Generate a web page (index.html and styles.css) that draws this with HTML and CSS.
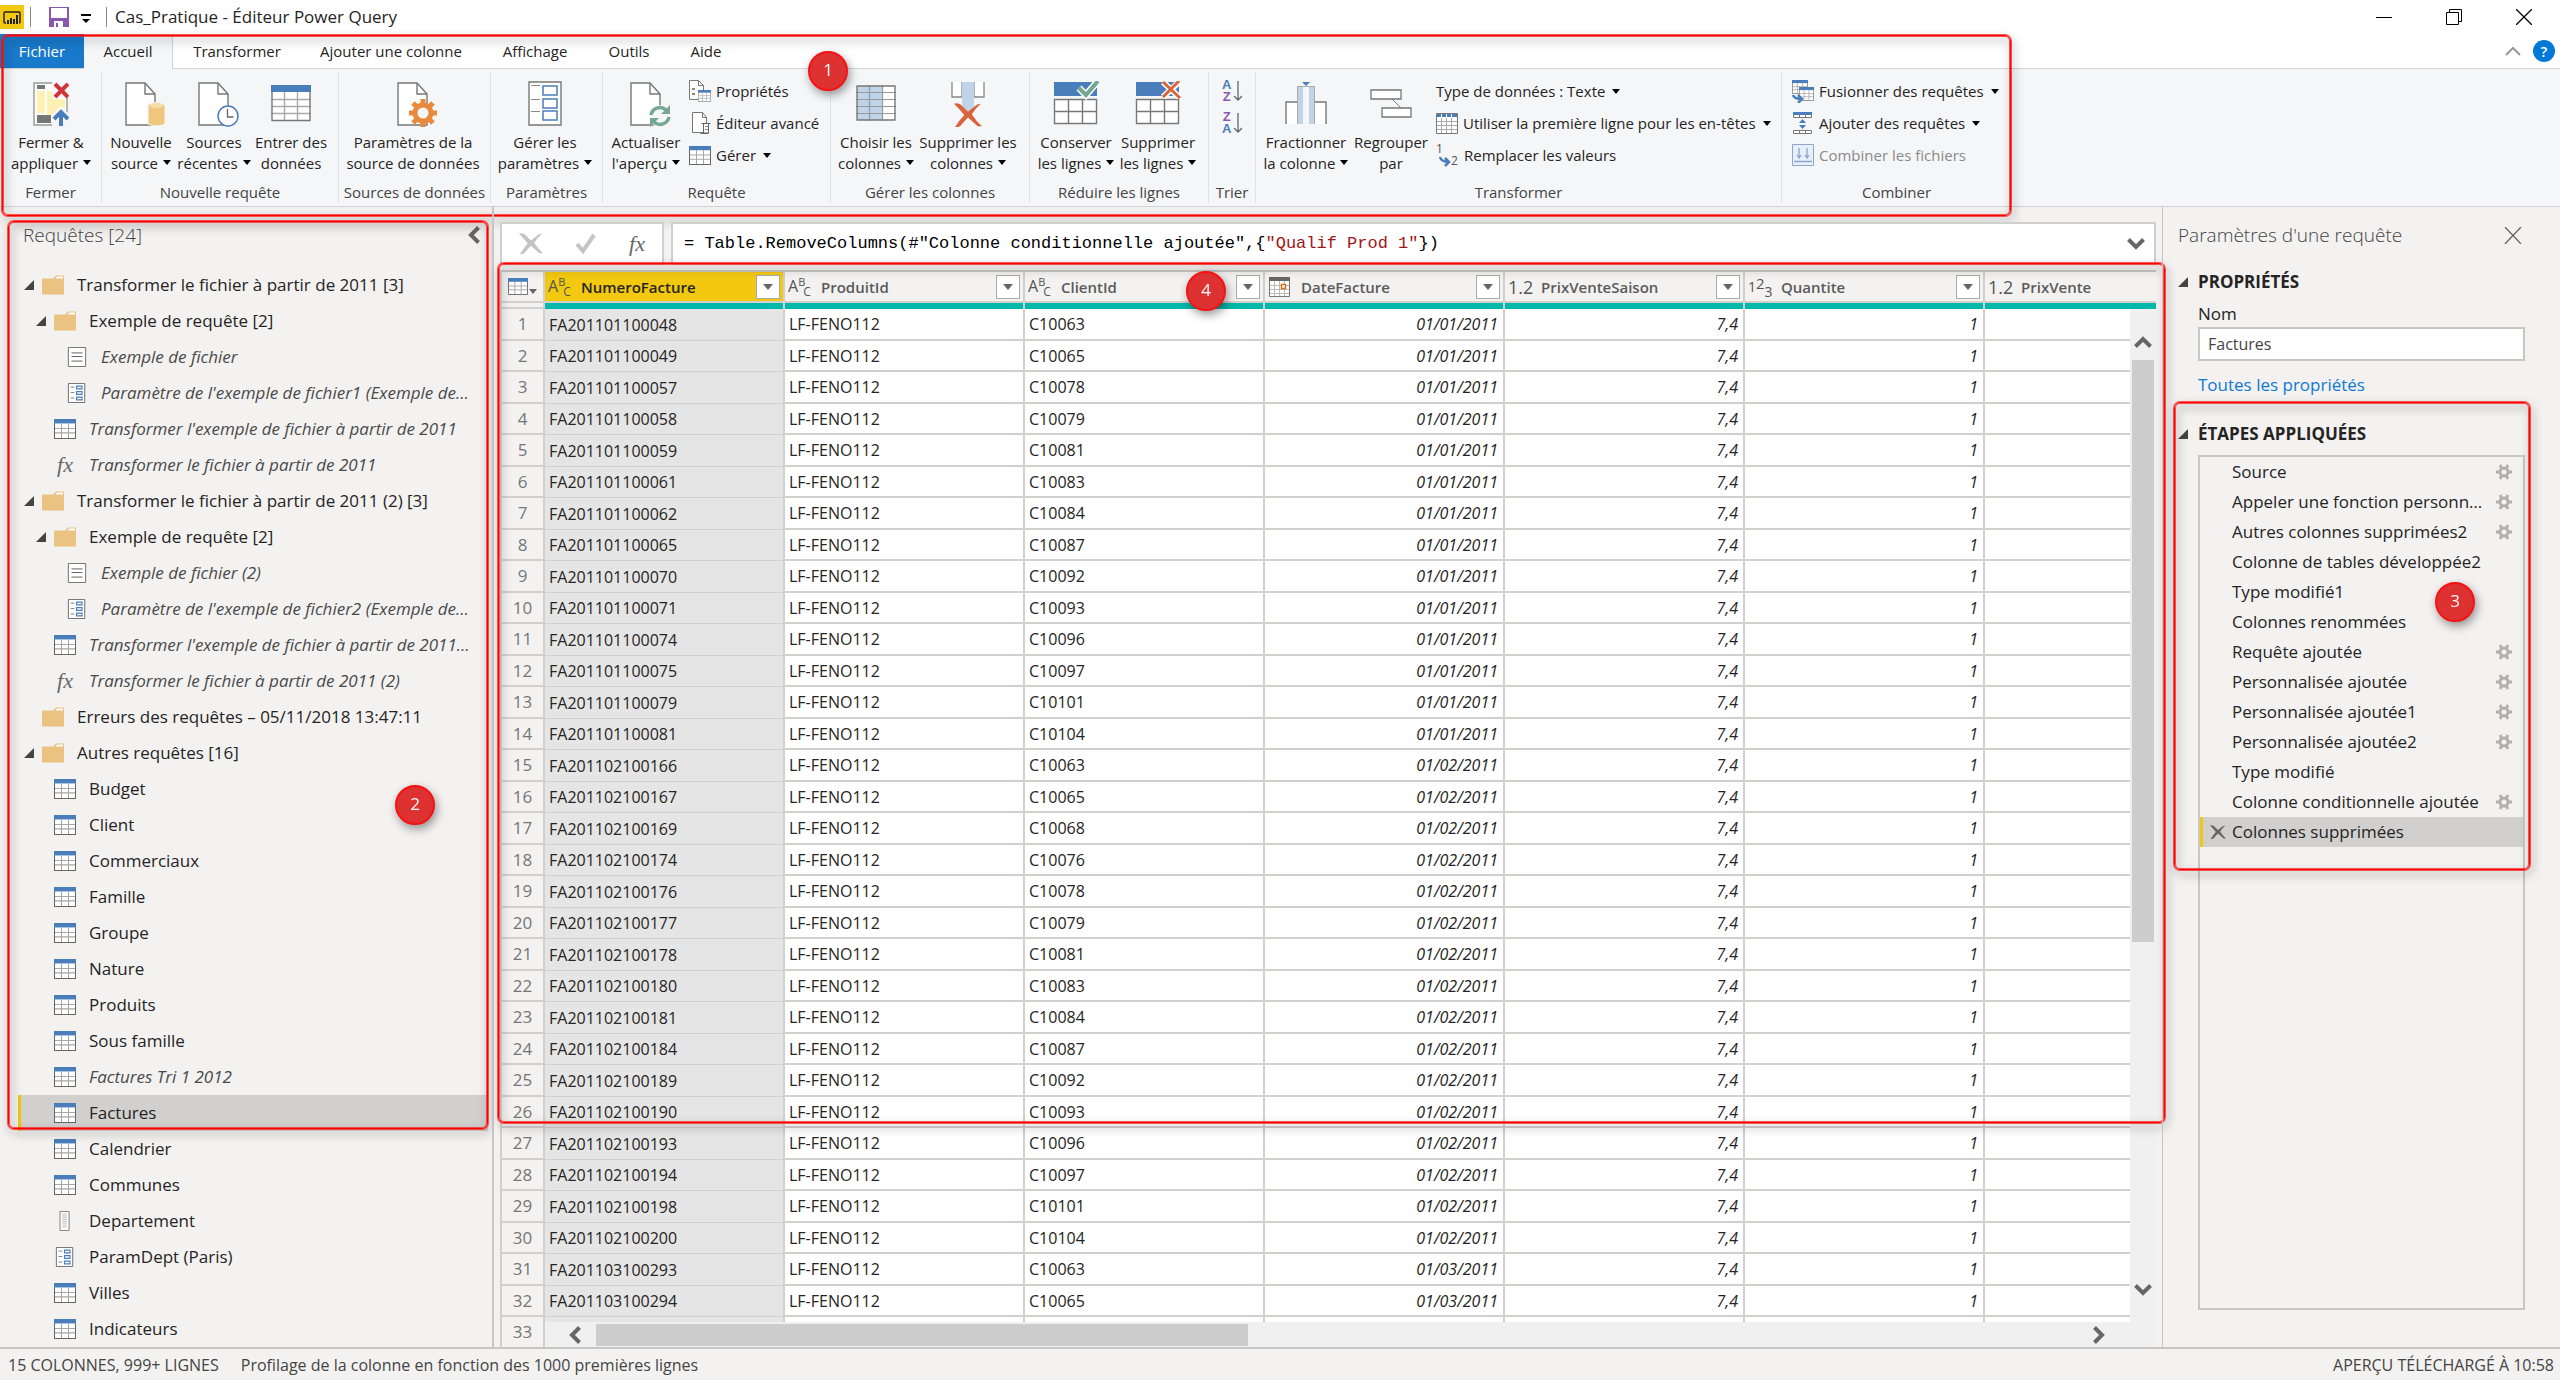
FILE: index.html
```html
<!DOCTYPE html>
<html lang="fr">
<head>
<meta charset="utf-8">
<title>Cas_Pratique - Éditeur Power Query</title>
<link rel="stylesheet" href="styles.css">
</head>
<body>
<svg class="sprite" aria-hidden="true">
  <symbol id="i-table" viewBox="0 0 22 18" preserveAspectRatio="none"><path fill="#fff" d="M0 0h22v18H0z"/><path stroke="#a6a6a6" fill="none" d="M7.500 4v13M14.500 4v13M1 8.500h20M1 12.500h20"/><path stroke="#666" fill="none" d="M.5.5h21v17H.5z"/><path fill="#4a7ebb" d="M0 0h22v4H0z"/></symbol>
  <symbol id="i-folder" viewBox="0 0 22 19"><path fill="#eac282" d="M0 3h11l3-3h8v19H0z"/><path fill="#fff" d="M13.500 3l1.500-2h6v2z"/></symbol>
  <symbol id="i-list" viewBox="0 0 22 22"><path fill="#fff" stroke="#666" d="M1.500.5h19v21h-19z"/><path stroke="#555" d="M5 6.500h12M5 10.500h12M5 15.500h12"/></symbol>
  <symbol id="i-param" viewBox="0 0 22 22"><path fill="#fff" stroke="#666" d="M1.500.5h18v21h-18z"/><path stroke="#777" d="M4 4.500h4M4 10.500h4M4 16.500h4"/><path fill="#fff" stroke="#4a7ebb" stroke-width="1.300" d="M10.500 3.500h6v3h-6zM10.500 9.500h6v3h-6zM10.500 15.500h6v3h-6z"/></symbol>
  <symbol id="i-column" viewBox="0 0 22 22"><path fill="#fff" stroke="#777" d="M5.500.5h10v21h-10z"/><path stroke="#bbb" d="M8 3.500h5M8 5.500h5M8 7.500h5M8 9.500h5M8 11.500h5M8 13.500h5M8 15.500h5M8 17.500h5"/></symbol>
  <symbol id="i-tri" viewBox="0 0 10 10"><path fill="#444" d="M10 0v10H0z"/></symbol>
  <symbol id="i-doc" viewBox="0 0 31 44"><path fill="#fff" stroke="#777" stroke-width="1.400" d="M1 1h19l10 11v31H1z"/><path fill="none" stroke="#777" stroke-width="1.400" d="M20 1v11h10"/></symbol>
  <symbol id="i-gear" viewBox="0 0 16 16"><g fill="none" stroke="currentColor"><circle cx="8" cy="8" r="4" stroke-width="3"/><path stroke-width="2.800" d="M3 8H0M13 8h3M5.500 4L4 1M10.500 4L12 1M5.500 12L4 15M10.500 12l1.500 3"/></g></symbol>
  <symbol id="i-cog" viewBox="0 0 28 28"><circle cx="14" cy="14" r="8" fill="none" stroke="currentColor" stroke-width="5"/><path stroke="currentColor" stroke-width="5" d="M14 5V0M14 23v5M5 14H0M23 14h5M8 8L4 4M20 8l4-4M8 20l-4 4M20 20l4 4"/></symbol>
  <symbol id="i-date" viewBox="0 0 21 20"><path fill="#fff" stroke="#777" d="M.5.5h20v19H.5z"/><path stroke="#bbb" d="M5.500 4v15M10.500 4v15M15.500 4v15M1 8.500h19M1 12.500h19M1 16.500h19"/><path fill="#666" d="M0 0h21v4H0z"/><path fill="#fff" stroke="#e0741a" stroke-width="1.500" d="M12.500 7.500h4v4h-4z"/></symbol>
  <symbol id="i-chev" viewBox="0 0 18 12"><path fill="none" stroke="currentColor" stroke-width="4" d="M1.500 1.500L9 9l7.500-7.500"/></symbol>
  <symbol id="i-cross" viewBox="0 0 26 28" preserveAspectRatio="none"><path fill="currentColor" d="M0 1q5-2 8 3l5 6 6-6q2-3 6-3-5 5-8.500 12 4 8 9.500 14h-4l-9-10-6 8q-2 4-6 3 4-8 8.500-14Q5 7 0 1z"/></symbol>
</svg>

<header class="titlebar">
  <svg class="app-icon" viewBox="0 0 24 24"><path fill="#f2c811" d="M0 0h24v24H0z"/><path fill="none" stroke="#222" stroke-width="1.500" d="M6 18H5q-1 0-1-1V8q0-1 1-1h14q1 0 1 1v9q0 1-1 1"/><path stroke="#222" stroke-width="2" d="M8 19v-4M11 19v-6M14 19v-5M17 19v-9"/></svg>
  <i class="bar"></i>
  <button class="plain save" aria-label="Enregistrer"><svg width="20" height="20" viewBox="0 0 20 20"><path fill="#8a57ae" d="M0 0h20v20H0z"/><path fill="#fff" d="M2 1h16v10H2zM5 14h9v6H5z"/><path fill="#8a57ae" d="M7 16h2v4H7z"/></svg></button>
  <button class="plain more" aria-label="Personnaliser"><svg width="10" height="10" viewBox="0 0 10 10"><path d="M0 0h10v2H0zM1 5h8L5 9z"/></svg></button>
  <i class="bar"></i>
  <span class="doc-title">Cas_Pratique - Éditeur Power Query</span>
  <span class="window-buttons">
    <button class="plain" aria-label="Réduire"><svg width="16" height="16"><path stroke="#000" d="M0 8.500h16"/></svg></button>
    <button class="plain" aria-label="Restaurer"><svg width="16" height="16" fill="none" stroke="#000"><path d="M.5 3.500h12v12H.5zM3.500 3V.5h12v12H13"/></svg></button>
    <button class="plain" aria-label="Fermer"><svg width="16" height="16" stroke="#000" stroke-width="1.300"><path d="M0 0l16 16M16 0L0 16"/></svg></button>
  </span>
</header>

<div class="ribbon">
  <nav class="tabs">
    <button class="tab file">Fichier</button><button class="tab active">Accueil</button><button class="tab t-tr">Transformer</button><button class="tab t-add">Ajouter une colonne</button><button class="tab t-aff">Affichage</button><button class="tab t-out">Outils</button><button class="tab t-aide">Aide</button>
    <span class="ribbon-tools">
      <button class="plain" aria-label="Réduire le ruban"><svg width="16" height="10" fill="none" stroke="#999" stroke-width="2"><path d="M1 9l7-7 7 7"/></svg></button>
      <button class="help">?</button>
    </span>
  </nav>
  <div class="groups">
    <section class="group w102"><div class="tools">
      <button class="big b102"><svg width="36" height="44" viewBox="0 0 36 44"><path fill="#fff" stroke="#999" stroke-width="1.400" d="M1 1h33v42H1z"/><path fill="#fff0b3" d="M4 9h8v22H4zM14 9h6v8h12v10l-4-3-10 10h-4z"/><path fill="#777" d="M4 3h8v4H4zM4 33h14v8H4z"/><path fill="#f5f6f8" d="M19 0h17v16H19zM19 35l9-10 8 7v12H19z"/><path stroke="#d13438" stroke-width="4" d="M22 2l13 13M35 2L22 15"/><path fill="none" stroke="#4a7ebb" stroke-width="4" d="M28 44V30M21 37l7-7 7 7"/></svg><span>Fermer &amp;<br>appliquer<i class="dd"></i></span></button>
    </div><h3>Fermer</h3></section>
    <section class="group w237"><div class="tools">
      <button class="big b78 doc"><svg width="42" height="46"><use href="#i-doc" y="1" width="31" height="44"/><path fill="#efc67d" stroke="#f5f6f8" d="M23 24q8-5 17 0v19q-8 4-17 0z"/><ellipse cx="31.500" cy="24.500" rx="7" ry="2.500" fill="#f6dca8"/></svg><span>Nouvelle<br>source<i class="dd"></i></span></button>
      <button class="big b68 doc"><svg width="42" height="46"><use href="#i-doc" y="1" width="31" height="44"/><circle cx="30" cy="35" r="10" fill="#fff" stroke="#4a7ebb" stroke-width="1.500"/><path fill="none" stroke="#666" stroke-width="1.300" d="M29.500 28v8h6"/></svg><span>Sources<br>récentes<i class="dd"></i></span></button>
      <button class="big b86"><svg width="40" height="46"><path fill="#fff" d="M0 5h40v35H0z"/><path stroke="#aaa" fill="none" stroke-width="1.400" d="M13.500 11v28M26.500 11v28M0 18.500h40M0 25.500h40M0 32.500h40"/><path stroke="#777" stroke-width="1.400" fill="none" d="M1 5h38v34.500H1z"/><path fill="#4a7ebb" d="M0 4h40v7H0z"/></svg><span>Entrer des<br>données</span></button>
    </div><h3>Nouvelle requête</h3></section>
    <section class="group w152"><div class="tools">
      <button class="big b148 doc"><svg width="42" height="46"><use href="#i-doc" y="1" width="31" height="44"/><circle cx="26" cy="32" r="10" fill="#f5f6f8"/><use href="#i-cog" x="12" y="18" width="28" height="28" color="#e8893c"/></svg><span>Paramètres de la<br>source de données</span></button>
    </div><h3>Sources de données</h3></section>
    <section class="group w112"><div class="tools">
      <button class="big b108"><svg width="34" height="46"><path fill="#fff" stroke="#777" stroke-width="1.400" d="M1 1h32v43H1z"/><path stroke="#888" d="M3 4.500h9M3 18.500h9M3 30.500h9"/><path fill="#fff" stroke="#4a7ebb" stroke-width="1.500" d="M15 5h14v9H15zM15 18h14v9H15zM15 30h14v9H15z"/></svg><span>Gérer les<br>paramètres<i class="dd"></i></span></button>
    </div><h3>Paramètres</h3></section>
    <section class="group w228"><div class="tools">
      <button class="big b86 doc"><svg width="42" height="46"><use href="#i-doc" y="1" width="31" height="44"/><circle cx="30" cy="35" r="11" fill="#f5f6f8"/><g fill="none" stroke="#74a892" stroke-width="3.500"><path d="M21 34a9 9 0 0 1 15-5M39 36a9 9 0 0 1-15 5"/></g><path fill="#74a892" d="M40 24v9h-9zM20 46v-9h9z"/></svg><span>Actualiser<br>l'aperçu<i class="dd"></i></span></button>
      <div class="stack">
        <button class="small"><svg width="22" height="22"><path fill="#fff" stroke="#777" d="M.5.5h9l5 5v14H.5zM9.500.5v5h5"/><path stroke="#888" stroke-width="2" d="M3 9h3M3 14h3"/><use href="#i-table" x="9" y="10" width="13" height="12"/></svg>Propriétés</button>
        <button class="small"><svg width="22" height="22"><path fill="#fff" stroke="#777" d="M3.500.5h10l4 5v15h-14zM13.500.5v5h4"/><path fill="#fff" stroke="#666" d="M12.500 11.500h9M14.500 12v9h5v-9M11.500 21.500h8"/><path stroke="#888" d="M16 14.500h3M16 17.500h3"/></svg>Éditeur avancé</button>
        <button class="small"><svg width="22" height="19"><use href="#i-table" width="22" height="19"/></svg>Gérer<i class="dd"></i></button>
      </div>
    </div><h3>Requête</h3></section>
    <section class="group w199"><div class="tools">
      <button class="big b90"><svg width="40" height="46"><path fill="#fff" d="M0 4h40v36H0z"/><path fill="#bfd3e9" d="M1 5h26v34H1z"/><path stroke="#999" fill="none" stroke-width="1.200" d="M13.500 4v36M26.500 4v36M0 11.500h40M0 18.500h40M0 25.500h40M0 32.500h40"/><path stroke="#777" fill="none" stroke-width="1.400" d="M1 5h38v34H1z"/></svg><span>Choisir les<br>colonnes<i class="dd"></i></span></button>
      <button class="big b94"><svg width="34" height="46"><path fill="#fff" stroke="#888" stroke-width="1.300" d="M1 1v15h10V1M33 1v15H23V1"/><path fill="#bfd3e9" d="M11 1h12v25l-6 4-6-4z"/><use href="#i-cross" x="3" y="22" width="28" height="24" color="#d9643c"/></svg><span>Supprimer les<br>colonnes<i class="dd"></i></span></button>
    </div><h3>Gérer les colonnes</h3></section>
    <section class="group w179"><div class="tools">
      <button class="big b92"><svg width="46" height="46"><path fill="#4a7ebb" d="M1 1h43v14H1z"/><path fill="#fff" stroke="#777" stroke-width="1.400" d="M1.500 18.500h42v24h-42zM15.500 18v24M29.500 18v24M1 30.500h43"/><path fill="none" stroke="#fff" stroke-width="7" d="M26 7l7 7L44 1"/><path fill="none" stroke="#74a892" stroke-width="4" d="M26 7l7 7L45 0"/></svg><span>Conserver<br>les lignes<i class="dd"></i></span></button>
      <button class="big b72"><svg width="46" height="46"><path fill="#4a7ebb" d="M1 1h43v14H1z"/><path fill="#fff" stroke="#777" stroke-width="1.400" d="M1.500 18.500h42v24h-42zM15.500 18v24M29.500 18v24M1 30.500h43"/><path stroke="#fff" stroke-width="6" d="M28 1l16 15M44 1L28 16"/><path stroke="#d9643c" stroke-width="3" d="M28 1l17 16M44 0L28 16"/></svg><span>Supprimer<br>les lignes<i class="dd"></i></span></button>
    </div><h3>Réduire les lignes</h3></section>
    <section class="group w47"><div class="tools">
      <div class="stack sorts">
        <button class="small"><span class="az"><b class="blue">A</b><b class="violet">Z</b></span><svg width="9" height="22"><path fill="none" stroke="#666" stroke-width="1.300" d="M5 1v19M1 16l4 4 4-4"/></svg></button>
        <button class="small"><span class="az"><b class="violet">Z</b><b class="blue">A</b></span><svg width="9" height="22"><path fill="none" stroke="#666" stroke-width="1.300" d="M5 1v19M1 16l4 4 4-4"/></svg></button>
      </div>
    </div><h3>Trier</h3></section>
    <section class="group w526"><div class="tools">
      <button class="big b100"><svg width="42" height="46"><path fill="#fff" stroke="#777" stroke-width="1.400" d="M1 43V21h12v22M41 43V21H29v22"/><path fill="#bfd3e9" d="M12 5h18v38H12z"/><path fill="#f5f6f8" d="M18 5h6v38h-6z"/><path fill="none" stroke="#aaa" d="M12.500 43V5.500h17V43"/><path fill="#4a7ebb" d="M17 1h8l-4 4z"/></svg><span>Fractionner<br>la colonne<i class="dd"></i></span></button>
      <button class="big b70"><svg width="42" height="46"><path stroke="#777" d="M22 18l9 9"/><path fill="#fff" stroke="#777" stroke-width="1.300" d="M1 9h30v9H1zM12 27h29v9H12z"/></svg><span>Regrouper<br>par</span></button>
      <div class="stack pad10">
        <button class="small">Type de données : Texte<i class="dd"></i></button>
        <button class="small"><svg width="22" height="21"><path fill="#fff" stroke="#777" d="M.5.5h21v20H.5z"/><path stroke="#aaa" d="M5.500 5v15M10.500 5v15M15.500 5v15M1 8.500h20M1 12.500h20M1 16.500h20"/><path fill="#4a7ebb" d="M1 1h4v3H1zM6 1h4v3H6zM11 1h4v3h-4zM16 1h5v3h-5z"/></svg>Utiliser la première ligne pour les en-têtes<i class="dd"></i></button>
        <button class="small"><span class="swap"><span>1</span><svg width="12" height="10"><path fill="none" stroke="#4a7ebb" stroke-width="2.500" d="M1 0q1 5 9 5M6 1l4 4-4 4"/></svg><span>2</span></span>Remplacer les valeurs</button>
      </div>
    </div><h3>Transformer</h3></section>
    <section class="group w230"><div class="tools">
      <div class="stack pad10">
        <button class="small"><svg width="22" height="23"><use href="#i-table" width="16" height="14"/><use href="#i-table" x="7" y="7" width="15" height="14"/><path fill="none" stroke="#f5f6f8" stroke-width="5" d="M1 16q1 3 9 3"/><path fill="none" stroke="#4a7ebb" stroke-width="2.500" d="M1 15q1 4 9 4M6 15l4 4-4 4"/></svg>Fusionner des requêtes<i class="dd"></i></button>
        <button class="small"><svg width="22" height="22"><path fill="#fff" stroke="#777" d="M1.500.5h18v5h-18zM7.500 3v3M13.500 3v3M1.500 18.500h18v3h-18zM7.500 18v3M13.500 18v3"/><path fill="#4a7ebb" d="M1 0h19v3H1zM7 11l3.500-4 3.500 4zM7 13l3.500 4 3.500-4z"/></svg>Ajouter des requêtes<i class="dd"></i></button>
        <button class="small off" disabled><svg width="22" height="22"><path fill="#e6effa" stroke="#8fa6c8" d="M.5.5h21v21H.5z"/><path fill="none" stroke="#8fa6c8" stroke-width="1.300" d="M7 4v10M5 11l2 3 2-3M15 4v10M13 11l2 3 2-3M2 17.500h18"/></svg>Combiner les fichiers</button>
      </div>
    </div><h3>Combiner</h3></section>
  </div>
  <div class="callout c1"><b class="pin">1</b></div>
</div>

<main class="workspace">
  <aside class="queries">
    <div class="q-head"><h2>Requêtes [24]</h2><button class="plain" aria-label="Réduire le volet"><svg class="chev left"><use href="#i-chev"/></svg></button></div>
    <ul class="tree">
      <li class="l1"><svg class="tri"><use href="#i-tri"/></svg><svg class="ico"><use href="#i-folder"/></svg>Transformer le fichier à partir de 2011 [3]</li>
      <li class="l2"><svg class="tri"><use href="#i-tri"/></svg><svg class="ico"><use href="#i-folder"/></svg>Exemple de requête [2]</li>
      <li class="l3 it"><svg class="ico"><use href="#i-list"/></svg>Exemple de fichier</li>
      <li class="l3 it"><svg class="ico"><use href="#i-param"/></svg>Paramètre de l'exemple de fichier1 (Exemple de…</li>
      <li class="l4 it"><svg class="ico"><use href="#i-table"/></svg>Transformer l'exemple de fichier à partir de 2011</li>
      <li class="l4 it"><span class="ico fx">fx</span>Transformer le fichier à partir de 2011</li>
      <li class="l1"><svg class="tri"><use href="#i-tri"/></svg><svg class="ico"><use href="#i-folder"/></svg>Transformer le fichier à partir de 2011 (2) [3]</li>
      <li class="l2"><svg class="tri"><use href="#i-tri"/></svg><svg class="ico"><use href="#i-folder"/></svg>Exemple de requête [2]</li>
      <li class="l3 it"><svg class="ico"><use href="#i-list"/></svg>Exemple de fichier (2)</li>
      <li class="l3 it"><svg class="ico"><use href="#i-param"/></svg>Paramètre de l'exemple de fichier2 (Exemple de…</li>
      <li class="l4 it"><svg class="ico"><use href="#i-table"/></svg>Transformer l'exemple de fichier à partir de 2011…</li>
      <li class="l4 it"><span class="ico fx">fx</span>Transformer le fichier à partir de 2011 (2)</li>
      <li class="l1"><i class="tri"></i><svg class="ico"><use href="#i-folder"/></svg>Erreurs des requêtes – 05/11/2018 13:47:11</li>
      <li class="l1"><svg class="tri"><use href="#i-tri"/></svg><svg class="ico"><use href="#i-folder"/></svg>Autres requêtes [16]</li>
      <li class="l4"><svg class="ico"><use href="#i-table"/></svg>Budget</li>
      <li class="l4"><svg class="ico"><use href="#i-table"/></svg>Client</li>
      <li class="l4"><svg class="ico"><use href="#i-table"/></svg>Commerciaux</li>
      <li class="l4"><svg class="ico"><use href="#i-table"/></svg>Famille</li>
      <li class="l4"><svg class="ico"><use href="#i-table"/></svg>Groupe</li>
      <li class="l4"><svg class="ico"><use href="#i-table"/></svg>Nature</li>
      <li class="l4"><svg class="ico"><use href="#i-table"/></svg>Produits</li>
      <li class="l4"><svg class="ico"><use href="#i-table"/></svg>Sous famille</li>
      <li class="l4 it"><svg class="ico"><use href="#i-table"/></svg>Factures Tri 1 2012</li>
      <li class="l4 current"><svg class="ico"><use href="#i-table"/></svg>Factures</li>
      <li class="l4"><svg class="ico"><use href="#i-table"/></svg>Calendrier</li>
      <li class="l4"><svg class="ico"><use href="#i-table"/></svg>Communes</li>
      <li class="l4"><svg class="ico"><use href="#i-column"/></svg>Departement</li>
      <li class="l4"><svg class="ico"><use href="#i-param"/></svg>ParamDept (Paris)</li>
      <li class="l4"><svg class="ico"><use href="#i-table"/></svg>Villes</li>
      <li class="l4"><svg class="ico"><use href="#i-table"/></svg>Indicateurs</li>
    </ul>
    <div class="callout c2"><b class="pin">2</b></div>
  </aside>

  <section class="center">
    <div class="formula">
      <div class="f-tools">
        <button class="plain" aria-label="Annuler"><svg width="24" height="21" color="#c4c4c4"><use href="#i-cross" width="24" height="21"/></svg></button>
        <button class="plain" aria-label="Valider"><svg width="22" height="22" fill="none" stroke="#c4c4c4" stroke-width="4"><path d="M2 11l6 7L19 2"/></svg></button>
        <button class="plain fx">fx</button>
      </div>
      <div class="f-text"><code>= Table.RemoveColumns(#"Colonne conditionnelle ajoutée",{<em>"Qualif Prod 1"</em>})</code><button class="plain" aria-label="Développer"><svg class="chev"><use href="#i-chev"/></svg></button></div>
    </div>
    <div class="grid">
      <table>
        <colgroup><col class="c-n"><col class="c-d"><col class="c-d"><col class="c-d"><col class="c-d"><col class="c-d"><col class="c-d"><col></colgroup>
        <thead>
          <tr class="names">
            <th><div class="corner"><svg width="20" height="17"><use href="#i-table" width="20" height="17"/></svg><i class="dd grey"></i></div></th>
            <th class="sel"><div><span class="ty abc"><i>A</i><i>B</i><i>C</i></span>NumeroFacture<button class="filter" aria-label="Filtrer"><i class="dd grey"></i></button></div></th>
            <th><div><span class="ty abc"><i>A</i><i>B</i><i>C</i></span>ProduitId<button class="filter" aria-label="Filtrer"><i class="dd grey"></i></button></div></th>
            <th><div><span class="ty abc"><i>A</i><i>B</i><i>C</i></span>ClientId<button class="filter" aria-label="Filtrer"><i class="dd grey"></i></button></div></th>
            <th><div><svg class="ty date"><use href="#i-date"/></svg>DateFacture<button class="filter" aria-label="Filtrer"><i class="dd grey"></i></button></div></th>
            <th><div><span class="ty dec">1.2</span>PrixVenteSaison<button class="filter" aria-label="Filtrer"><i class="dd grey"></i></button></div></th>
            <th><div><span class="ty int"><i>1</i><i>2</i><i>3</i></span>Quantite<button class="filter" aria-label="Filtrer"><i class="dd grey"></i></button></div></th>
            <th><div><span class="ty dec">1.2</span>PrixVente</div></th>
          </tr>
          <tr class="quality"><td><td><td><td><td><td><td><td></tr>
        </thead>
        <tbody>
          <tr><th>1<td>FA201101100048<td>LF-FENO112<td>C10063<td>01/01/2011<td>7,4<td>1<td></tr>
          <tr><th>2<td>FA201101100049<td>LF-FENO112<td>C10065<td>01/01/2011<td>7,4<td>1<td></tr>
          <tr><th>3<td>FA201101100057<td>LF-FENO112<td>C10078<td>01/01/2011<td>7,4<td>1<td></tr>
          <tr><th>4<td>FA201101100058<td>LF-FENO112<td>C10079<td>01/01/2011<td>7,4<td>1<td></tr>
          <tr><th>5<td>FA201101100059<td>LF-FENO112<td>C10081<td>01/01/2011<td>7,4<td>1<td></tr>
          <tr><th>6<td>FA201101100061<td>LF-FENO112<td>C10083<td>01/01/2011<td>7,4<td>1<td></tr>
          <tr><th>7<td>FA201101100062<td>LF-FENO112<td>C10084<td>01/01/2011<td>7,4<td>1<td></tr>
          <tr><th>8<td>FA201101100065<td>LF-FENO112<td>C10087<td>01/01/2011<td>7,4<td>1<td></tr>
          <tr><th>9<td>FA201101100070<td>LF-FENO112<td>C10092<td>01/01/2011<td>7,4<td>1<td></tr>
          <tr><th>10<td>FA201101100071<td>LF-FENO112<td>C10093<td>01/01/2011<td>7,4<td>1<td></tr>
          <tr><th>11<td>FA201101100074<td>LF-FENO112<td>C10096<td>01/01/2011<td>7,4<td>1<td></tr>
          <tr><th>12<td>FA201101100075<td>LF-FENO112<td>C10097<td>01/01/2011<td>7,4<td>1<td></tr>
          <tr><th>13<td>FA201101100079<td>LF-FENO112<td>C10101<td>01/01/2011<td>7,4<td>1<td></tr>
          <tr><th>14<td>FA201101100081<td>LF-FENO112<td>C10104<td>01/01/2011<td>7,4<td>1<td></tr>
          <tr><th>15<td>FA201102100166<td>LF-FENO112<td>C10063<td>01/02/2011<td>7,4<td>1<td></tr>
          <tr><th>16<td>FA201102100167<td>LF-FENO112<td>C10065<td>01/02/2011<td>7,4<td>1<td></tr>
          <tr><th>17<td>FA201102100169<td>LF-FENO112<td>C10068<td>01/02/2011<td>7,4<td>1<td></tr>
          <tr><th>18<td>FA201102100174<td>LF-FENO112<td>C10076<td>01/02/2011<td>7,4<td>1<td></tr>
          <tr><th>19<td>FA201102100176<td>LF-FENO112<td>C10078<td>01/02/2011<td>7,4<td>1<td></tr>
          <tr><th>20<td>FA201102100177<td>LF-FENO112<td>C10079<td>01/02/2011<td>7,4<td>1<td></tr>
          <tr><th>21<td>FA201102100178<td>LF-FENO112<td>C10081<td>01/02/2011<td>7,4<td>1<td></tr>
          <tr><th>22<td>FA201102100180<td>LF-FENO112<td>C10083<td>01/02/2011<td>7,4<td>1<td></tr>
          <tr><th>23<td>FA201102100181<td>LF-FENO112<td>C10084<td>01/02/2011<td>7,4<td>1<td></tr>
          <tr><th>24<td>FA201102100184<td>LF-FENO112<td>C10087<td>01/02/2011<td>7,4<td>1<td></tr>
          <tr><th>25<td>FA201102100189<td>LF-FENO112<td>C10092<td>01/02/2011<td>7,4<td>1<td></tr>
          <tr><th>26<td>FA201102100190<td>LF-FENO112<td>C10093<td>01/02/2011<td>7,4<td>1<td></tr>
          <tr><th>27<td>FA201102100193<td>LF-FENO112<td>C10096<td>01/02/2011<td>7,4<td>1<td></tr>
          <tr><th>28<td>FA201102100194<td>LF-FENO112<td>C10097<td>01/02/2011<td>7,4<td>1<td></tr>
          <tr><th>29<td>FA201102100198<td>LF-FENO112<td>C10101<td>01/02/2011<td>7,4<td>1<td></tr>
          <tr><th>30<td>FA201102100200<td>LF-FENO112<td>C10104<td>01/02/2011<td>7,4<td>1<td></tr>
          <tr><th>31<td>FA201103100293<td>LF-FENO112<td>C10063<td>01/03/2011<td>7,4<td>1<td></tr>
          <tr><th>32<td>FA201103100294<td>LF-FENO112<td>C10065<td>01/03/2011<td>7,4<td>1<td></tr>
          <tr><th>33<td><td><td><td><td><td><td></tr>
        </tbody>
      </table>
      <div class="vbar"><svg class="chev up"><use href="#i-chev"/></svg><div class="vtrack"><i class="vthumb"></i></div><svg class="chev"><use href="#i-chev"/></svg></div>
      <div class="hbar"><svg class="chev left"><use href="#i-chev"/></svg><div class="htrack"><i class="hthumb"></i></div><svg class="chev right"><use href="#i-chev"/></svg></div>
    </div>
    <div class="callout c4"><b class="pin">4</b></div>
  </section>

  <aside class="settings">
    <div class="s-head"><h2>Paramètres d'une requête</h2><button class="plain" aria-label="Fermer le volet"><svg width="18" height="17" stroke="#666" stroke-width="1.300"><path d="M1 0l16 17M17 0L1 17"/></svg></button></div>
    <h3 class="sec"><svg class="tri"><use href="#i-tri"/></svg>PROPRIÉTÉS</h3>
    <div class="props">
      <label for="nom">Nom</label>
      <input id="nom" type="text" value="Factures">
      <a href="#proprietes">Toutes les propriétés</a>
    </div>
    <h3 class="sec steps-title"><svg class="tri"><use href="#i-tri"/></svg>ÉTAPES APPLIQUÉES</h3>
    <ul class="steps">
      <li><span>Source</span><svg class="gear"><use href="#i-gear"/></svg></li>
      <li><span>Appeler une fonction personn…</span><svg class="gear"><use href="#i-gear"/></svg></li>
      <li><span>Autres colonnes supprimées2</span><svg class="gear"><use href="#i-gear"/></svg></li>
      <li><span>Colonne de tables développée2</span></li>
      <li><span>Type modifié1</span></li>
      <li><span>Colonnes renommées</span></li>
      <li><span>Requête ajoutée</span><svg class="gear"><use href="#i-gear"/></svg></li>
      <li><span>Personnalisée ajoutée</span><svg class="gear"><use href="#i-gear"/></svg></li>
      <li><span>Personnalisée ajoutée1</span><svg class="gear"><use href="#i-gear"/></svg></li>
      <li><span>Personnalisée ajoutée2</span><svg class="gear"><use href="#i-gear"/></svg></li>
      <li><span>Type modifié</span></li>
      <li><span>Colonne conditionnelle ajoutée</span><svg class="gear"><use href="#i-gear"/></svg></li>
      <li class="current"><svg class="del" color="#666"><use href="#i-cross" width="16" height="14"/></svg><span>Colonnes supprimées</span></li>
    </ul>
    <div class="callout c3"><b class="pin">3</b></div>
  </aside>
</main>

<footer class="status"><span>15 COLONNES, 999+ LIGNES</span><span>Profilage de la colonne en fonction des 1000 premières lignes</span><span class="end">APERÇU TÉLÉCHARGÉ À 10:58</span></footer>
</body>
</html>
```
FILE: styles.css
```css
* { box-sizing: border-box; }
html, body { height: 100%; margin: 0; }
body {
  display: flex; flex-direction: column; overflow: hidden;
  font: 17px/24px "Open Sans", "Noto Sans", sans-serif;
  color: #252423; background: #f3f2f1;
}
button, input { font: inherit; color: inherit; }
button { padding: 0; border: 0; background: none; }
h2, h3, ul { margin: 0; padding: 0; font-weight: 400; list-style: none; }
svg { display: block; flex: none; }
.sprite { position: absolute; width: 0; height: 0; }
.plain { display: flex; align-items: center; justify-content: center; }

.dd { display: inline-block; width: 0; height: 0; border: 4px solid transparent; border-top: 5px solid #000; border-bottom: 0; margin-left: 5px; vertical-align: 4px; }
.dd.grey { border-top-color: #666; margin: 0; vertical-align: middle; }
.chev { width: 18px; height: 12px; color: #666; }
.chev.up { transform: rotate(180deg); }
.chev.left { transform: rotate(90deg); }
.chev.right { transform: rotate(-90deg); }
.tri { width: 10px; height: 10px; }
.fx { font: italic 22px/24px "Liberation Serif", serif; color: #666; }

/* title bar */
.titlebar { display: flex; align-items: center; height: 34px; background: #fff; flex: none; }
.app-icon { width: 24px; height: 24px; }
.bar { width: 1px; height: 20px; background: #888; margin: 0 8px 0 6px; }
.save { margin-left: 10px; }
.more { margin: 4px 9px 0 12px; }
.doc-title { font-size: 17px; }
.window-buttons { display: flex; margin-left: auto; padding-right: 1px; }
.window-buttons button { width: 70px; height: 34px; }

/* ribbon */
.ribbon { position: relative; flex: none; font-size: 15px; line-height: 21px; }
.tabs { display: flex; height: 35px; background: #fff; border-bottom: 1px solid #d2d2d4; }
.tab { height: 34px; }
.tab.file { width: 84px; background: #1979ca; color: #fff; }
.tab.active { width: 89px; height: 35px; background: #f5f6f8; border-right: 1px solid #d2d2d4; }
.t-tr { width: 128px; }
.t-add { width: 180px; }
.t-aff { width: 108px; }
.t-out { width: 80px; }
.t-aide { width: 74px; }
.ribbon-tools { display: flex; align-items: center; gap: 12px; margin-left: auto; padding-right: 5px; }
.help { width: 22px; height: 22px; border-radius: 50%; background: #0078d7; color: #fff; font-weight: 600; }
.groups { display: flex; height: 138px; padding-top: 3px; background: #f5f6f8; border-bottom: 1px solid #d2d2d4; }
.group { display: flex; flex-direction: column; height: 131px; border-right: 1px solid #e1e2e4; flex: none; }
.group h3 { text-align: center; font-size: 15px; color: #444; white-space: nowrap; }
.tools { display: flex; height: 110px; }
.w47 { width: 47px; } .w102 { width: 102px; } .w112 { width: 112px; } .w152 { width: 152px; }
.w179 { width: 179px; } .w199 { width: 199px; } .w228 { width: 228px; } .w230 { width: 230px; }
.w237 { width: 237px; } .w526 { width: 526px; }
.big { display: flex; flex-direction: column; align-items: center; gap: 5px; padding-top: 9px; white-space: nowrap; flex: none; }
.big > svg { height: 46px; }
.big.doc > svg { margin-left: 10px; }
.b68 { width: 68px; } .b70 { width: 70px; } .b72 { width: 72px; } .b78 { width: 78px; } .b86 { width: 86px; }
.b90 { width: 90px; } .b92 { width: 92px; } .b94 { width: 94px; } .b100 { width: 100px; } .b102 { width: 102px; }
.b108 { width: 108px; } .b148 { width: 148px; }
.stack { display: flex; flex-direction: column; padding-top: 3px; }
.stack.pad10 { padding-left: 10px; }
.stack.sorts { padding-left: 13px; }
.small { display: flex; align-items: center; gap: 5px; height: 32px; white-space: nowrap; }
.small .dd { margin-left: 2px; }
.small.off { color: #8a8a8a; }
.sorts .small { gap: 2px; }
.az { display: flex; flex-direction: column; align-items: center; font: 700 13px/12px "Liberation Sans", sans-serif; }
.az b { height: 12px; }
.blue { color: #4a7ebb; }
.violet { color: #8a57ae; }
.swap { display: flex; align-items: center; width: 23px; height: 24px; font-size: 12px; line-height: 12px; color: #555; }
.swap > :first-child { align-self: flex-start; }
.swap > svg { align-self: flex-end; margin-left: -4px; }
.swap > :last-child { align-self: flex-end; }

/* callouts */
.callout {
  position: absolute; pointer-events: none; border: 1px solid #f00; border-radius: 6px;
  box-shadow: 0 0 0 1px rgba(255, 20, 20, .7), inset 0 0 0 1px rgba(255, 20, 20, .7);
  filter: drop-shadow(2px 4px 5px rgba(0, 0, 0, .4));
}
.pin {
  position: absolute; width: 40px; height: 40px; border-radius: 50%; border: 2px solid #f51212;
  background: #de3131; color: #fff; font: 400 17px/34px "Open Sans", sans-serif; text-align: center;
}
.c1 { left: 2px; top: 1px; width: 2009px; height: 181px; }
.c1 .pin { left: 805px; top: 15px; }
.c2 { left: 8px; right: 4px; top: 14px; height: 908px; }
.c2 .pin { right: 52px; top: 563px; }
.c3 { left: 11px; right: 30px; top: 195px; height: 468px; }
.c3 .pin { right: 54px; top: 179px; }
.c4 { left: 4px; right: -3px; top: 56px; height: 860px; }
.c4 .pin { left: 687px; top: 7px; }

/* workspace */
.workspace { display: flex; flex: 1; min-height: 0; }
.queries { position: relative; width: 494px; flex: none; border-right: 2px solid #c8c6c4; overflow: hidden; }
.q-head { display: flex; align-items: center; justify-content: space-between; height: 60px; padding: 0 9px 5px 23px; }
.q-head h2, .s-head h2 { font-size: 19px; font-weight: 300; color: #444; }
.tree li { display: flex; align-items: center; height: 36px; margin-right: 4px; white-space: nowrap; }
.tree .tri { margin-right: 8px; }
.tree .ico { width: 22px; height: 20px; margin-right: 13px; }
.tree .fx { line-height: 20px; text-align: center; }
.tree .it { font-style: italic; color: #4a4a4a; }
.l1 { padding-left: 24px; }
.l2 { padding-left: 36px; }
.l3 { padding-left: 66px; }
.l4 { padding-left: 54px; }
.tree .current { margin-left: 18px; padding-left: 33px; border-left: 3px solid #f2c811; background: #d2d0ce; }

.center { position: relative; display: flex; flex-direction: column; flex: 1; min-width: 0; padding: 15px 6px 0; }
.formula { display: flex; gap: 7px; height: 43px; margin-bottom: 5px; flex: none; }
.f-tools, .f-text { background: #fff; border: 2px solid #d2d0ce; }
.f-tools { display: flex; align-items: center; justify-content: space-between; width: 164px; padding: 0 17px; }
.f-text { display: flex; align-items: center; justify-content: space-between; flex: 1; padding: 0 9px 0 11px; }
code { font: 17px/24px "Liberation Mono", monospace; color: #000; white-space: pre; }
code em { font-style: normal; color: #a31515; }

.grid { position: relative; flex: 1; min-height: 0; overflow: hidden; border-top: 2px solid #c8c6c4; border-left: 2px solid #d2d0ce; background: #f3f2f1; }
table { width: 100%; table-layout: fixed; border-collapse: separate; border-spacing: 0; }
.c-n { width: 43px; }
.c-d { width: 240px; }
th, td { padding: 0; font-weight: 400; border-right: 2px solid #d2d0ce; border-bottom: 2px solid #d2d0ce; white-space: nowrap; }
tr > :last-child { border-right: 0; }
.names { height: 31px; }
.names th { font-size: 15px; font-weight: 600; color: #5a5a5a; background: #f3f2f1; }
.names .sel { background: #f2c811; color: #252423; }
.names th > div { display: flex; align-items: center; height: 29px; padding: 0 3px; }
.names .corner { gap: 1px; padding-left: 6px; }
.corner .dd { margin-top: 10px; }
.ty { display: flex; width: 24px; height: 24px; margin-right: 9px; font-weight: 400; color: #555; }
.ty i { font-style: normal; line-height: 14px; }
.abc i:nth-child(1) { font-size: 16px; line-height: 22px; }
.abc i:nth-child(2) { font-size: 11px; }
.abc i:nth-child(3) { font-size: 12px; align-self: flex-end; margin-left: -2px; }
.int i:nth-child(1) { font-size: 14px; line-height: 24px; }
.int i:nth-child(2) { font-size: 15px; line-height: 16px; }
.int i:nth-child(3) { font-size: 14px; align-self: flex-end; }
.dec { font-size: 18px; align-items: center; }
.date { width: 21px; height: 20px; margin: 0 11px 0 1px; }
.filter { display: flex; align-items: center; justify-content: center; width: 24px; height: 24px; margin-left: auto; background: #fff; border: 1px solid #aaa; }
.filter .dd { border-width: 6px 5px 0; }
.quality { height: 6px; }
.quality td { border-bottom: 0; background: #01b8aa; }
.quality td:first-child { background: #f3f2f1; border-bottom: 2px solid #d2d0ce; }
tbody tr { height: 31px; }
tbody tr:nth-child(odd) { height: 32px; }
tbody th { color: #767676; background: #f3f2f1; line-height: 22px; }
tbody td { padding: 0 5px 0 4px; font-size: 16px; line-height: 22px; background: #fff; }
tbody td:nth-child(2) { background: #e5e5e5; border-bottom: 1px solid #d2d0ce; }
tbody td:nth-child(n+5) { text-align: right; font-style: italic; }

.vbar { position: absolute; right: 0; top: 37px; bottom: 0; width: 26px; display: flex; flex-direction: column; align-items: center; padding: 27px 0 51px; background: #f0f0f0; }
.vtrack { flex: 1; width: 22px; padding-top: 12px; }
.vthumb { display: block; height: 63%; background: #cdcdcd; }
.hbar { position: absolute; left: 43px; right: 0; bottom: 0; height: 25px; display: flex; align-items: center; padding: 0 48px 0 21px; background: #f0f0f0; }
.htrack { flex: 1; height: 22px; padding: 0 12px; }
.hthumb { display: block; width: 44%; height: 22px; background: #cdcdcd; }

.settings { position: relative; display: flex; flex-direction: column; width: 398px; flex: none; padding: 0 35px 37px 15px; border-left: 1px solid #c8c6c4; }
.s-head { display: flex; align-items: center; justify-content: space-between; height: 56px; padding-right: 3px; margin-bottom: 7px; }
.sec { display: flex; align-items: center; gap: 10px; height: 24px; font-size: 17px; font-weight: 700; }
.props { display: flex; flex-direction: column; align-items: flex-start; padding: 7px 0 0 20px; }
.props label { font-size: 17px; line-height: 26px; }
.props input { width: 100%; height: 34px; padding: 0 8px; font-size: 16px; color: #444; background: #fff; border: 2px solid #c8c6c4; }
.props a { margin-top: 12px; font-size: 17px; color: #0f78d4; text-decoration: none; }
.steps-title { margin-top: 25px; }
.steps { flex: 1; margin: 9px 0 0 20px; border: 2px solid #c8c6c4; }
.steps li { display: flex; align-items: center; justify-content: space-between; height: 30px; padding: 0 11px 0 32px; white-space: nowrap; }
.gear { width: 16px; height: 16px; color: #b0b0b0; }
.steps .current { justify-content: flex-start; gap: 6px; padding-left: 7px; border-left: 3px solid #f2c811; background: #d2d0ce; }
.del { width: 16px; height: 14px; }

.status { display: flex; align-items: center; gap: 22px; height: 33px; padding: 0 6px 0 8px; flex: none; border-top: 2px solid #c8c6c4; font-size: 16px; color: #444; }
.status .end { margin-left: auto; }
```
